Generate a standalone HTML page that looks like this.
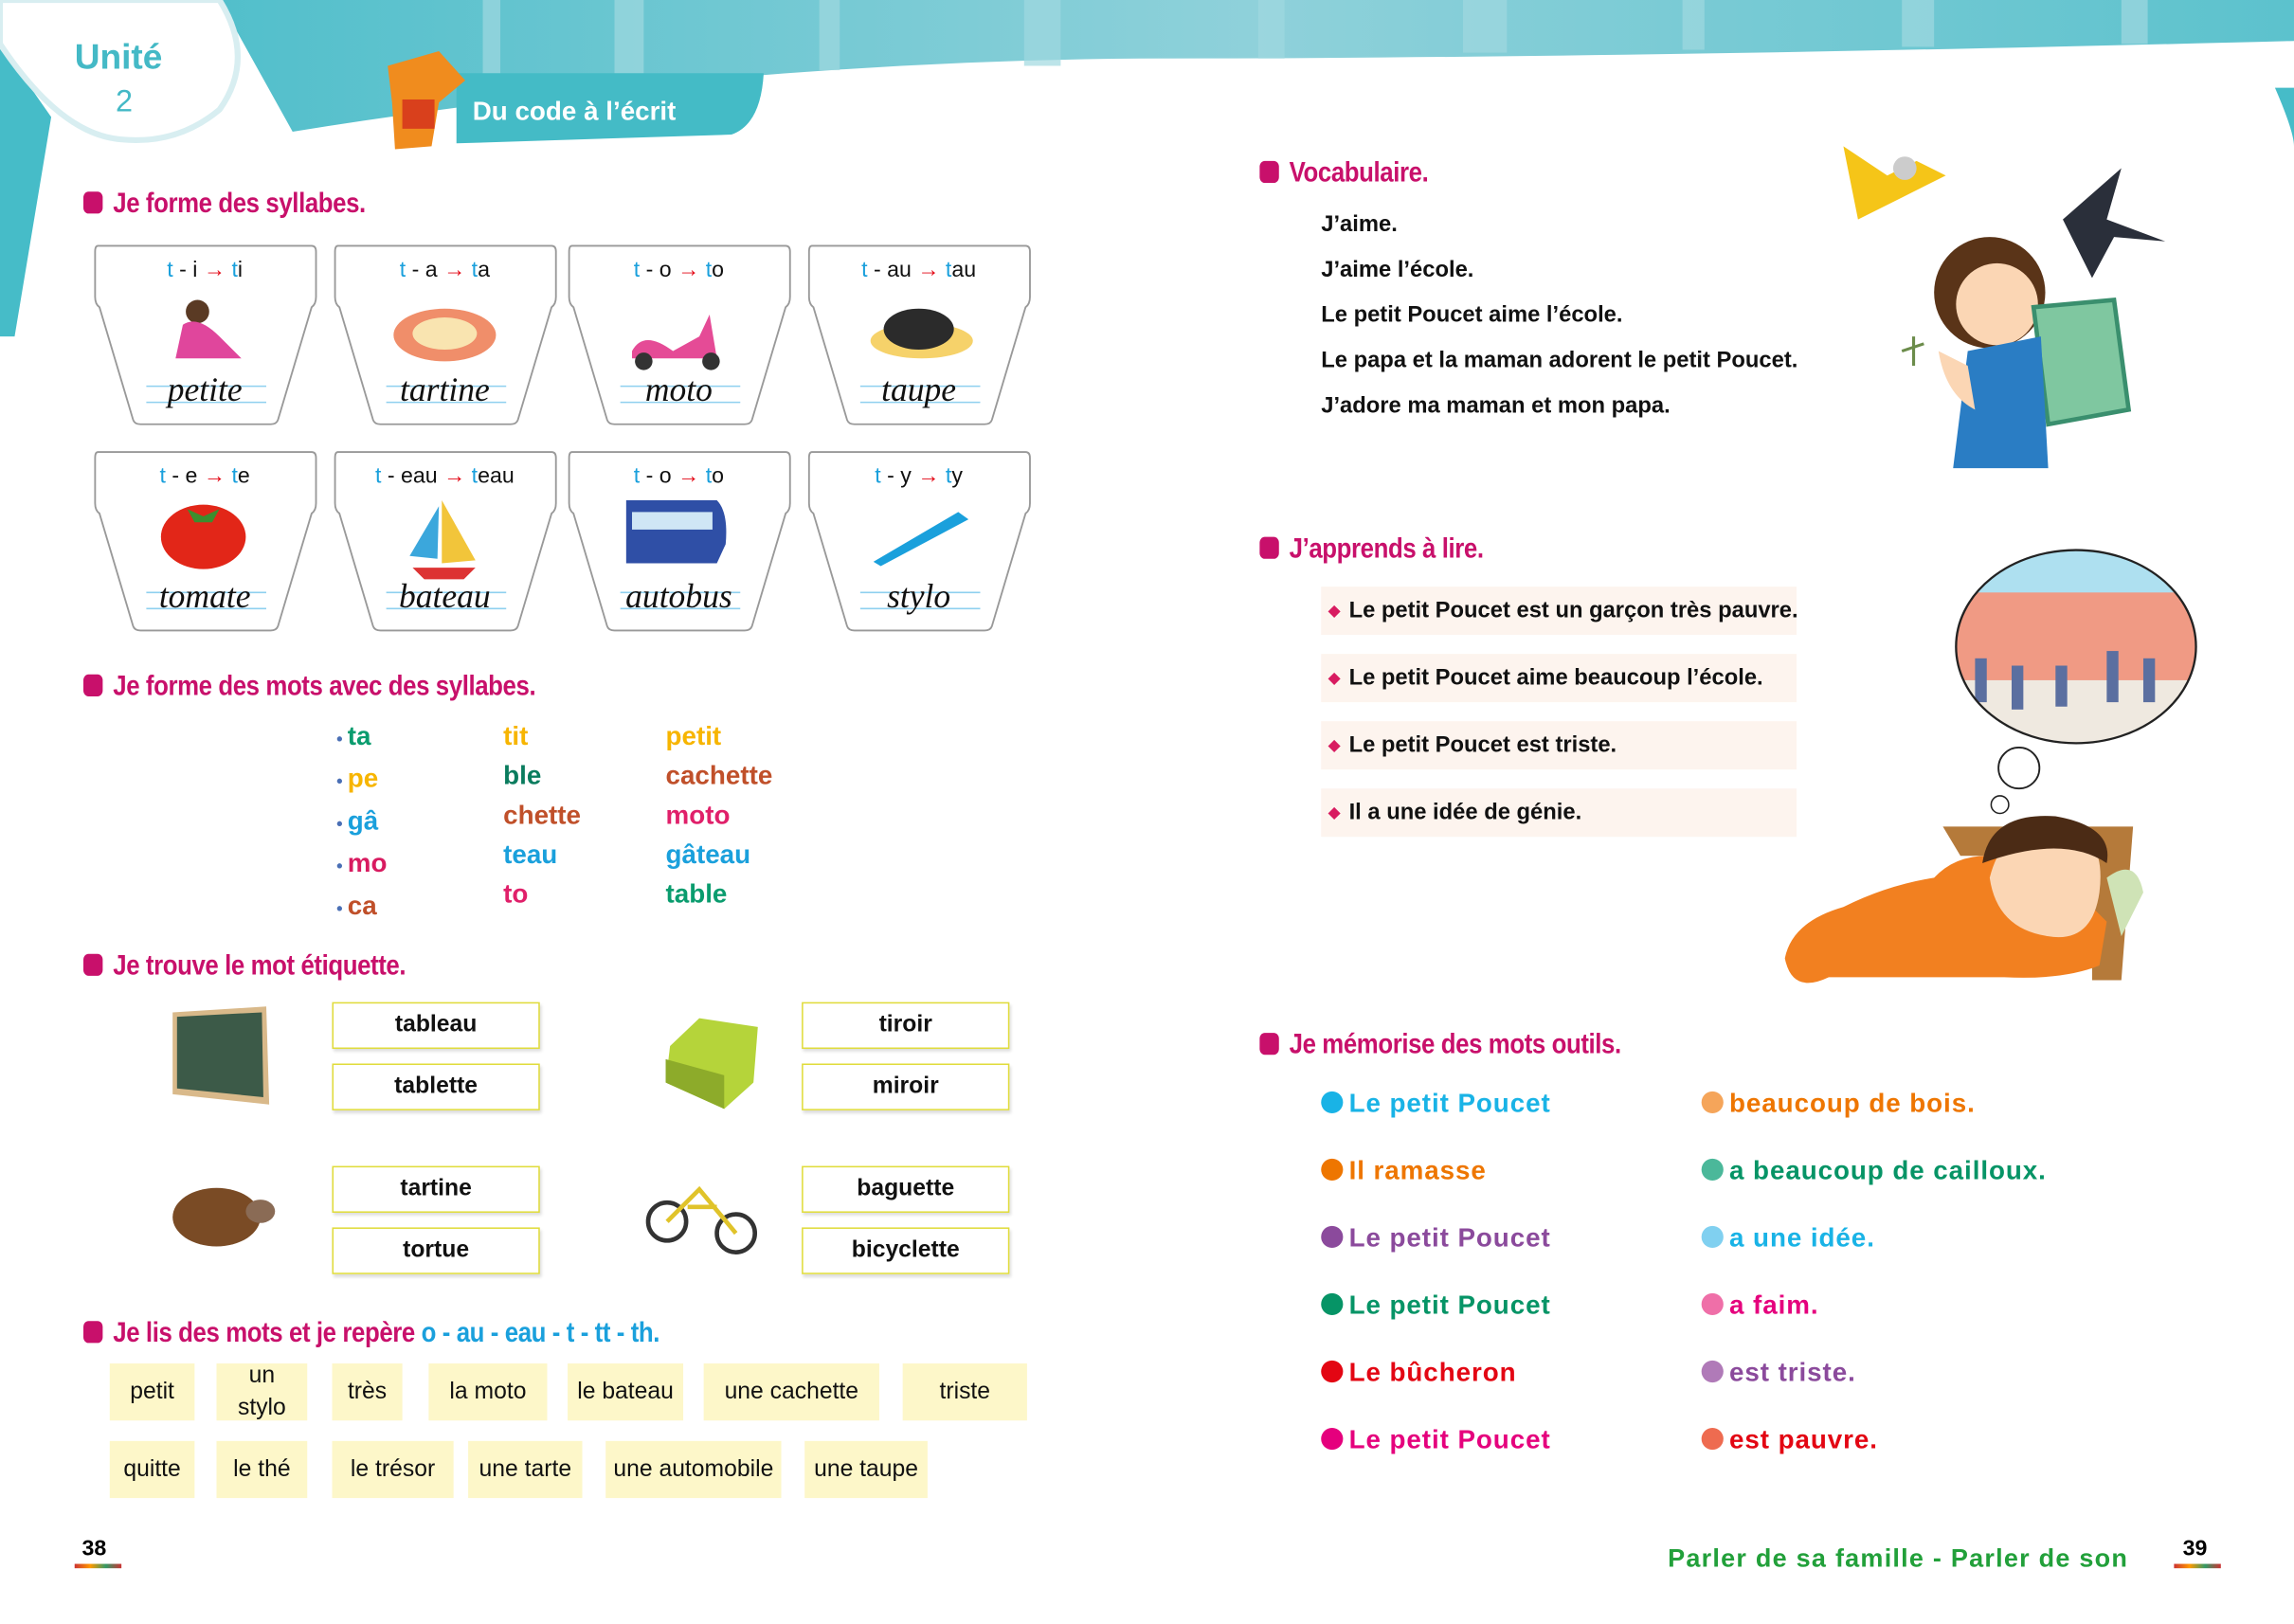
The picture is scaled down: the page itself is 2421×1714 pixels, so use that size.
<!DOCTYPE html>
<html><head><meta charset="utf-8">
<style>
html,body{margin:0;padding:0;background:#fff;overflow:hidden;width:2421px;height:1713px}
#p{position:absolute;left:0;top:0;width:1568px;height:1110px;transform:scale(1.544);transform-origin:0 0;font-family:"Liberation Sans",sans-serif;}
.a{position:absolute;white-space:nowrap}
.h{position:absolute;font-weight:bold;color:#c8106b;font-size:19px;transform:scaleX(.88);transform-origin:0 50%;white-space:nowrap;letter-spacing:-.3px}
.h:before{content:"";display:inline-block;width:15px;height:15px;background:#c8106b;border-radius:4px;margin-right:8px;vertical-align:-1px}
.cup{position:absolute;width:152px;height:124px}
.cup .t{position:absolute;top:8px;width:152px;text-align:center;font-size:15px;color:#111}
.b{color:#1aa0dc}.r{color:#e30613}
.cw{position:absolute;top:86px;width:152px;text-align:center;font-family:"Liberation Serif",serif;font-style:italic;font-size:23px;color:#111}
.s{position:absolute;font-weight:bold;font-size:18px}
.e{position:absolute;width:140px;height:30px;border:1.5px solid #e0dc3c;box-shadow:1px 2px 2px #ddd;text-align:center;line-height:30px;font-size:16px;font-weight:bold;color:#111}
.w{position:absolute;background:#fdf7c9;height:39px;display:flex;align-items:center;justify-content:center;font-size:16px;color:#111;text-align:center;line-height:22px}
.v{position:absolute;left:903px;font-size:15.4px;font-weight:bold;color:#111;white-space:nowrap}
.sb{position:absolute;left:903px;width:325px;height:33px;background:#fdf4ee;font-size:15.4px;font-weight:bold;color:#111;line-height:33px;padding-left:19px;box-sizing:border-box;white-space:nowrap;overflow:visible}
.sb:before{content:"";position:absolute;left:6px;top:14px;width:6px;height:6px;background:#d81b60;transform:rotate(45deg)}
.m{position:absolute;font-size:18px;font-weight:bold;letter-spacing:.6px;white-space:nowrap}
.m i{display:inline-block;width:15px;height:15px;border-radius:50%;margin-right:4px;vertical-align:-1px}
</style></head><body><div id="p">
<svg class="a" style="left:0;top:0" width="1568" height="240">
<defs><linearGradient id="g" x1="0" x2="1"><stop offset="0" stop-color="#52bfcb"/><stop offset=".5" stop-color="#8fd1da"/><stop offset="1" stop-color="#5cc2cd"/></linearGradient></defs>
<path d="M150 0H1568V28Q1100 40 780 40Q500 42 200 90Z" fill="url(#g)"/>
<g fill="#9fd8df" opacity=".7"><rect x="330" y="0" width="12" height="60"/><rect x="420" y="0" width="20" height="55"/><rect x="560" y="0" width="14" height="48"/><rect x="700" y="0" width="25" height="45"/><rect x="860" y="0" width="18" height="40"/><rect x="1000" y="0" width="30" height="36"/><rect x="1150" y="0" width="15" height="34"/><rect x="1300" y="0" width="22" height="32"/><rect x="1450" y="0" width="18" height="30"/></g>
<path d="M0 30L35 80L10 230L0 230Z" fill="#46bcc8"/>
<path d="M0 0H150Q175 40 150 75Q120 100 80 95Q40 90 0 30Z" fill="#fff" stroke="#d8eef1" stroke-width="4"/>
<path d="M1555 60Q1568 90 1568 100V60Z" fill="#46bcc8"/>
<path d="M312 50H522Q520 85 500 92L312 98Z" fill="#44bbc6"/>
<path d="M265 45L300 35L318 55L300 70L295 100L270 102L268 70Z" fill="#f08c1e"/>
<rect x="275" y="68" width="22" height="20" fill="#d9401c"/>
</svg>
<div class="a" style="left:51px;top:26px;font-size:24px;font-weight:bold;color:#44b9c6">Unité</div>
<div class="a" style="left:79px;top:58px;font-size:21px;color:#44b9c6">2</div>
<div class="a" style="left:323px;top:66px;font-size:18px;font-weight:bold;color:#fff">Du code à l’écrit</div>

<div class="h" style="left:57px;top:129px">Je forme des syllabes.</div>
<svg class="a" style="left:0;top:0" width="760" height="440">
<g fill="#fff" stroke="#999" stroke-width="1.2">
<path id="c" d="M67 168H213Q216 168 216 172V203Q216 208 213 210L190 287Q189 290 185 290H96Q92 290 91 287L68 210Q65 208 65 203V172Q65 168 67 168Z"/>
<use href="#c" x="164"/><use href="#c" x="324"/><use href="#c" x="488"/>
<use href="#c" y="141"/><use href="#c" x="164" y="141"/><use href="#c" x="324" y="141"/><use href="#c" x="488" y="141"/>
</g>
<g stroke="#8fd0ef" stroke-width="1"><path d="M100 264H182M100 275H182M264 264H346M264 275H346M424 264H506M424 275H506M588 264H670M588 275H670M100 405H182M100 416H182M264 405H346M264 416H346M424 405H506M424 416H506M588 405H670M588 416H670"/></g>
<circle cx="135" cy="213" r="8" fill="#5a3a24"/><path d="M125 222Q135 215 150 230L165 245H120Z" fill="#e0469c"/>
<ellipse cx="304" cy="229" rx="35" ry="18" fill="#f08e6a"/><ellipse cx="304" cy="228" rx="22" ry="11" fill="#f9e4b0"/>
<path d="M432 240Q440 225 460 240L478 230L485 215L490 245H432Z" fill="#e54b96"/><circle cx="440" cy="247" r="6" fill="#333"/><circle cx="486" cy="247" r="6" fill="#333"/>
<ellipse cx="630" cy="233" rx="35" ry="12" fill="#f6d26a"/><ellipse cx="628" cy="225" rx="24" ry="14" fill="#2b2b2b"/>
<ellipse cx="139" cy="367" rx="29" ry="22" fill="#e22618"/><path d="M128 348L139 353L150 348L145 357H133Z" fill="#3c8e2e"/>
<path d="M302 342L302 385L325 383Z" fill="#f2c53a"/><path d="M300 346L280 380L299 382Z" fill="#3ba7dc"/><path d="M282 388H325L317 396H290Z" fill="#d33"/>
<path d="M428 342H490Q498 350 496 372L490 385H428Z" fill="#2f4fa6"/><rect x="432" y="350" width="55" height="12" fill="#cfe6f5"/>
<path d="M597 384L655 350L662 355L602 387Z" fill="#1aa0dc"/>
</svg>
<div class="cup" style="left:64px;top:168px"><div class="t"><span class="b">t</span> - i <span class="r">→</span> <span class="b">t</span>i</div><div class="cw">petite</div></div>
<div class="cup" style="left:228px;top:168px"><div class="t"><span class="b">t</span> - a <span class="r">→</span> <span class="b">t</span>a</div><div class="cw">tartine</div></div>
<div class="cup" style="left:388px;top:168px"><div class="t"><span class="b">t</span> - o <span class="r">→</span> <span class="b">t</span>o</div><div class="cw">moto</div></div>
<div class="cup" style="left:552px;top:168px"><div class="t"><span class="b">t</span> - au <span class="r">→</span> <span class="b">t</span>au</div><div class="cw">taupe</div></div>
<div class="cup" style="left:64px;top:309px"><div class="t"><span class="b">t</span> - e <span class="r">→</span> <span class="b">t</span>e</div><div class="cw">tomate</div></div>
<div class="cup" style="left:228px;top:309px"><div class="t"><span class="b">t</span> - eau <span class="r">→</span> <span class="b">t</span>eau</div><div class="cw">bateau</div></div>
<div class="cup" style="left:388px;top:309px"><div class="t"><span class="b">t</span> - o <span class="r">→</span> <span class="b">t</span>o</div><div class="cw">autobus</div></div>
<div class="cup" style="left:552px;top:309px"><div class="t"><span class="b">t</span> - y <span class="r">→</span> <span class="b">t</span>y</div><div class="cw">stylo</div></div>

<div class="h" style="left:57px;top:459px">Je forme des mots avec des syllabes.</div>
<div class="s" style="left:230px;top:490px;line-height:27px"><span style="color:#4a6fb5;font-size:12px">• </span><span style="color:#0a9c6e">ta</span><br><span style="color:#4a6fb5;font-size:12px">• </span><span style="color:#f7b500">pe</span><br><span style="color:#4a6fb5;font-size:12px">• </span><span style="color:#1aa0dc">gâ</span><br><span style="color:#4a6fb5;font-size:12px">• </span><span style="color:#d81b60">mo</span><br><span style="color:#4a6fb5;font-size:12px">• </span><span style="color:#c0502a">ca</span></div>
<div class="s" style="left:344px;top:490px;line-height:27px"><span style="color:#f7b500">tit</span><br><span style="color:#0a7c5e">ble</span><br><span style="color:#c0502a">chette</span><br><span style="color:#1aa0dc">teau</span><br><span style="color:#e0206a">to</span></div>
<div class="s" style="left:455px;top:490px;line-height:27px"><span style="color:#f7b500">petit</span><br><span style="color:#c0502a">cachette</span><br><span style="color:#e0206a">moto</span><br><span style="color:#1aa0dc">gâteau</span><br><span style="color:#0a9c6e">table</span></div>

<div class="h" style="left:57px;top:650px">Je trouve le mot étiquette.</div>
<svg class="a" style="left:0;top:680px" width="540" height="190">
<path d="M118 12L182 8L184 75L118 68Z" fill="#d9b98a"/><path d="M121 15L179 12L180 70L121 64Z" fill="#3c5a48"/>
<path d="M458 35L478 16L518 22L515 60L495 78L455 60Z" fill="#b5d43a"/><path d="M455 44L495 55L495 78L455 60Z" fill="#8dab2a"/>
<ellipse cx="148" cy="152" rx="30" ry="20" fill="#7a4b25"/><ellipse cx="178" cy="148" rx="10" ry="8" fill="#8a6b55"/>
<circle cx="456" cy="155" r="13" fill="none" stroke="#333" stroke-width="3"/><circle cx="503" cy="163" r="13" fill="none" stroke="#333" stroke-width="3"/><path d="M456 155L478 133L503 163M470 145L490 145" stroke="#e0c32a" stroke-width="3" fill="none"/>
</svg>
<div class="e" style="left:227px;top:685px">tableau</div>
<div class="e" style="left:227px;top:727px">tablette</div>
<div class="e" style="left:227px;top:797px">tartine</div>
<div class="e" style="left:227px;top:839px">tortue</div>
<div class="e" style="left:548px;top:685px">tiroir</div>
<div class="e" style="left:548px;top:727px">miroir</div>
<div class="e" style="left:548px;top:797px">baguette</div>
<div class="e" style="left:548px;top:839px">bicyclette</div>

<div class="h" style="left:57px;top:901px">Je lis des mots et je repère <span style="color:#1aa0dc">o - au - eau - t - tt - th.</span></div>
<div class="w" style="left:75px;top:932px;width:58px">petit</div>
<div class="w" style="left:148px;top:932px;width:62px">un<br>stylo</div>
<div class="w" style="left:227px;top:932px;width:48px">très</div>
<div class="w" style="left:293px;top:932px;width:81px">la moto</div>
<div class="w" style="left:388px;top:932px;width:79px">le bateau</div>
<div class="w" style="left:481px;top:932px;width:120px">une cachette</div>
<div class="w" style="left:617px;top:932px;width:85px">triste</div>
<div class="w" style="left:75px;top:985px;width:58px">quitte</div>
<div class="w" style="left:148px;top:985px;width:62px">le thé</div>
<div class="w" style="left:227px;top:985px;width:83px">le trésor</div>
<div class="w" style="left:320px;top:985px;width:78px">une tarte</div>
<div class="w" style="left:414px;top:985px;width:120px">une automobile</div>
<div class="w" style="left:550px;top:985px;width:84px">une taupe</div>

<div class="a" style="left:56px;top:1050px;font-weight:bold;font-size:15px">38</div>
<div class="a" style="left:51px;top:1069px;width:32px;height:3px;background:linear-gradient(90deg,#c33,#f90,#396,#c33)"></div>

<div class="h" style="left:861px;top:108px">Vocabulaire.</div>
<div class="v" style="top:145px">J’aime.</div>
<div class="v" style="top:176px">J’aime l’école.</div>
<div class="v" style="top:207px">Le petit Poucet aime l’école.</div>
<div class="v" style="top:238px">Le papa et la maman adorent le petit Poucet.</div>
<div class="v" style="top:269px">J’adore ma maman et mon papa.</div>
<svg class="a" style="left:1250px;top:90px" width="250" height="240">
<path d="M10 10L40 30L60 20L80 30L50 45L20 60Z" fill="#f5c518"/><circle cx="52" cy="25" r="8" fill="#ccc"/>
<path d="M160 60L200 25L190 60L230 75L195 72L180 100Z" fill="#2a2f3a"/>
<circle cx="110" cy="110" r="38" fill="#5a3418"/><circle cx="115" cy="118" r="28" fill="#fbd6b4"/>
<path d="M140 120L195 115L205 190L150 200Z" fill="#7fc7a0" stroke="#3a8f6e" stroke-width="3"/>
<path d="M95 150L145 140L150 230L85 230Z" fill="#2a7dc4"/><path d="M75 150Q80 180 100 190L95 160Z" fill="#fbd6b4"/>
<path d="M50 150L65 145M58 140L58 160" stroke="#6b8c4a" stroke-width="2"/>
</svg>

<div class="h" style="left:861px;top:365px">J’apprends à lire.</div>
<div class="sb" style="top:401px">Le petit Poucet est un garçon très pauvre.</div>
<div class="sb" style="top:447px">Le petit Poucet aime beaucoup l’école.</div>
<div class="sb" style="top:493px">Le petit Poucet est triste.</div>
<div class="sb" style="top:539px">Il a une idée de génie.</div>
<svg class="a" style="left:1210px;top:370px" width="300" height="330">
<defs><clipPath id="cc"><ellipse cx="209" cy="72" rx="82" ry="66"/></clipPath></defs>
<g clip-path="url(#cc)"><rect x="120" y="0" width="180" height="150" fill="#aee0f0"/><rect x="120" y="35" width="180" height="60" fill="#f09a84"/><rect x="120" y="95" width="180" height="50" fill="#efe9e0"/>
<g fill="#5b6fa0"><rect x="140" y="80" width="8" height="30"/><rect x="165" y="85" width="8" height="30"/><rect x="195" y="85" width="8" height="28"/><rect x="230" y="75" width="8" height="35"/><rect x="255" y="80" width="8" height="30"/></g></g>
<ellipse cx="209" cy="72" rx="82" ry="66" fill="none" stroke="#222" stroke-width="1.5"/>
<circle cx="170" cy="155" r="14" fill="#fff" stroke="#222" stroke-width="1.2"/><circle cx="157" cy="180" r="6" fill="#fff" stroke="#222"/>
<path d="M118 195H248L240 300H220V215H130Z" fill="#b57a3a"/>
<path d="M112 230Q140 200 200 230L230 260L225 290Q200 300 160 298H40Q15 310 10 285Q15 260 50 250Q80 235 112 230Z" fill="#f28020"/>
<path d="M150 230Q160 190 200 195Q230 200 225 240Q220 275 190 270Q155 265 150 230Z" fill="#fbd6b4"/>
<path d="M145 220Q150 185 195 188Q235 195 230 220Q200 200 145 220Z" fill="#4b2b15"/>
<path d="M230 230Q250 215 255 240L240 270Z" fill="#cfe3b6"/>
</svg>

<div class="h" style="left:861px;top:704px">Je mémorise des mots outils.</div>
<div class="m" style="left:903px;top:744px;color:#19b3e6"><i style="background:#19b3e6"></i>Le petit Poucet</div>
<div class="m" style="left:903px;top:790px;color:#ee7600"><i style="background:#ee7600"></i>Il ramasse</div>
<div class="m" style="left:903px;top:836px;color:#8b4a9c"><i style="background:#8b4a9c"></i>Le petit Poucet</div>
<div class="m" style="left:903px;top:882px;color:#069466"><i style="background:#069466"></i>Le petit Poucet</div>
<div class="m" style="left:903px;top:928px;color:#e30613"><i style="background:#e30613"></i>Le bûcheron</div>
<div class="m" style="left:903px;top:974px;color:#e5007d"><i style="background:#e5007d"></i>Le petit Poucet</div>
<div class="m" style="left:1163px;top:744px;color:#ee7600"><i style="background:#f5a55a"></i>beaucoup de bois.</div>
<div class="m" style="left:1163px;top:790px;color:#069466"><i style="background:#4bb89a"></i>a beaucoup de cailloux.</div>
<div class="m" style="left:1163px;top:836px;color:#19b3e6"><i style="background:#80d0f0"></i>a une idée.</div>
<div class="m" style="left:1163px;top:882px;color:#e5007d"><i style="background:#ef6fa8"></i>a faim.</div>
<div class="m" style="left:1163px;top:928px;color:#8b4a9c"><i style="background:#b07ab8"></i>est triste.</div>
<div class="m" style="left:1163px;top:974px;color:#e30613"><i style="background:#ee6b50"></i>est pauvre.</div>

<div class="a" style="left:1140px;top:1055px;font-size:17.5px;font-weight:bold;color:#22a03a;letter-spacing:.8px">Parler de sa famille - Parler de son</div>
<div class="a" style="left:1492px;top:1050px;font-weight:bold;font-size:15px">39</div>
<div class="a" style="left:1486px;top:1069px;width:32px;height:3px;background:linear-gradient(90deg,#c33,#f90,#396,#c33)"></div>
</div></body></html>
